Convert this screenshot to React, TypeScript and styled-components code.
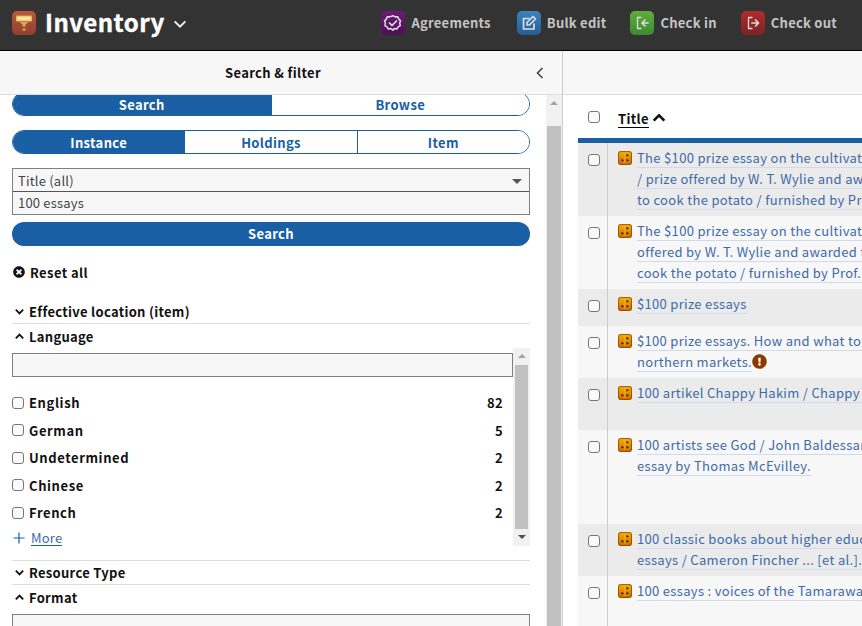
import React from "react";
import styled, { createGlobalStyle } from "styled-components";
import { FaExclamationCircle, FaTimesCircle } from "react-icons/fa";

const BLUE = "#1a5fa3";
const FONT = `"Noto Sans CJK SC", "Source Sans Pro", "Open Sans", sans-serif`;

type Row = { lines: string[]; height: number; warn?: boolean };

const ROWS: Row[] = [
  {
    height: 73,
    lines: [
      "The $100 prize essay on the cultivation of the potato",
      "/ prize offered by W. T. Wylie and awarded to",
      "to cook the potato / furnished by Prof. E. Smith",
    ],
  },
  {
    height: 73,
    lines: [
      "The $100 prize essay on the cultivation of the potato",
      "offered by W. T. Wylie and awarded to D. Gilbert",
      "cook the potato / furnished by Prof. E. Smith",
    ],
  },
  { height: 37, lines: ["$100 prize essays"] },
  {
    height: 52,
    warn: true,
    lines: ["$100 prize essays. How and what to grow for", "northern markets."],
  },
  { height: 52, lines: ["100 artikel Chappy Hakim / Chappy Hakim"] },
  {
    height: 94,
    lines: ["100 artists see God / John Baldessari and others", "essay by Thomas McEvilley."],
  },
  {
    height: 52,
    lines: ["100 classic books about higher education", "essays / Cameron Fincher ... [et al.]."],
  },
  { height: 60, lines: ["100 essays : voices of the Tamarawa"] },
];

const LANGUAGES = [
  { name: "English", count: 82 },
  { name: "German", count: 5 },
  { name: "Undetermined", count: 2 },
  { name: "Chinese", count: 2 },
  { name: "French", count: 2 },
];

function Chevron({ up, size = 12, weight = 2 }: { up?: boolean; size?: number; weight?: number }) {
  return (
    <svg width={size} height={size} viewBox="0 0 12 12" fill="none" stroke="currentColor" strokeWidth={weight}>
      <path d={up ? "M2 8l4-4 4 4" : "M2 4l4 4 4-4"} />
    </svg>
  );
}

function AppLogo() {
  return (
    <svg width="24" height="24" viewBox="0 0 24 24">
      <defs>
        <linearGradient id="logoBg" x1="0" y1="0" x2="0" y2="1">
          <stop offset="0" stopColor="#b9573a" />
          <stop offset="1" stopColor="#8e4031" />
        </linearGradient>
      </defs>
      <rect width="24" height="24" rx="5" fill="url(#logoBg)" />
      <rect x="4.5" y="5" width="15" height="5" fill="#f6e3a0" stroke="#e2b050" />
      <path d="M7.5 11h9l-3 2.5v2h-3v-2z" fill="#dfa35a" />
      <circle cx="12" cy="18.5" r="1.5" fill="#d89a50" />
    </svg>
  );
}

function ActionIcon({ kind }: { kind: "agreements" | "bulk" | "in" | "out" }) {
  return (
    <svg width="24" height="24" viewBox="0 0 24 24" fill="none" stroke="#dcdcdc" strokeWidth="1.7" strokeLinecap="round" strokeLinejoin="round">
      {kind === "agreements" && (
        <>
          <path d="M12 4l2.6 1.2 2.8-.1 1 2.6 2 1.9-1 2.6.7 2.7-2.4 1.4-1.5 2.4-2.8-.5L12 20l-2.4-1.8-2.8.5-1.5-2.4L3 14.900l.6-2.700-1-2.600 2-1.900 1-2.600 2.800.1z" transform="translate(1.2 1.200) scale(.9)" />
          <path d="M8.500 12l2.500 2.500 4.500-4.500" />
        </>
      )}
      {kind === "bulk" && (
        <>
          <path d="M17 13v5H6.500V7.500H12" />
          <path d="M10 11.500L16 5.500l2.500 2.500-6 6H10z" />
        </>
      )}
      {kind === "in" && (
        <>
          <path d="M11 6.500H7.500v11H11" strokeWidth="1.300" />
          <path d="M18 12h-6M15 9l-3 3 3 3" />
        </>
      )}
      {kind === "out" && (
        <>
          <path d="M11 6.500H7.500v11H11" strokeWidth="1.300" />
          <path d="M11 12h6.500M14.500 9l3 3-3 3" />
        </>
      )}
    </svg>
  );
}

function RecordIcon() {
  return (
    <RecordTile>
      <svg width="14" height="14" viewBox="0 0 14 14">
        <path d="M7 2v10" stroke="#f7cf5a" strokeWidth=".6" />
        <path d="M8.500 3l2.500 1.300-2.500 1.300zM3.500 8l2.500 1.300-2.500 1.300zM8.500 8l2.500 1.300-2.500 1.300z" fill="#1c1200" />
      </svg>
    </RecordTile>
  );
}

export default function App() {
  return (
    <>
      <GlobalStyle />
      <Page>
        <TopBar>
          <Brand>
            <AppLogo />
            <BrandName>Inventory</BrandName>
            <BrandCaret>
              <Chevron size={16} weight={1.5} />
            </BrandCaret>
          </Brand>
          <Actions>
            <Action>
              <ActionTile $from="#6d1a78" $to="#4d1154">
                <ActionIcon kind="agreements" />
              </ActionTile>
              <ActionLabel>Agreements</ActionLabel>
            </Action>
            <Action>
              <ActionTile $from="#3a83bd" $to="#245f94">
                <ActionIcon kind="bulk" />
              </ActionTile>
              <ActionLabel>Bulk edit</ActionLabel>
            </Action>
            <Action>
              <ActionTile $from="#60ad3c" $to="#3c8a33">
                <ActionIcon kind="in" />
              </ActionTile>
              <ActionLabel>Check in</ActionLabel>
            </Action>
            <Action>
              <ActionTile $from="#b02c2c" $to="#7c2222">
                <ActionIcon kind="out" />
              </ActionTile>
              <ActionLabel>Check out</ActionLabel>
            </Action>
          </Actions>
        </TopBar>

        <Panes>
          <FilterPane>
            <PaneHeader>
              <PaneTitle>Search &amp; filter</PaneTitle>
              <CollapseButton>
                <svg width="12" height="14" viewBox="0 0 12 14" fill="none" stroke="#444" strokeWidth="1.600">
                  <path d="M8.500 2l-5 5 5 5" />
                </svg>
              </CollapseButton>
            </PaneHeader>
            <FilterBody>
              <FilterContent>
                <Segments $clipped>
                  <Segment $active>Search</Segment>
                  <Segment>Browse</Segment>
                </Segments>
                <Segments>
                  <Segment $active>Instance</Segment>
                  <Segment>Holdings</Segment>
                  <Segment>Item</Segment>
                </Segments>
                <SearchBox>
                  <SelectField>
                    Title (all)
                    <SelectArrow />
                  </SelectField>
                  <QueryField>100 essays</QueryField>
                </SearchBox>
                <SearchButton>Search</SearchButton>
                <ResetRow>
                  <FaTimesCircle size={12} />
                  Reset all
                </ResetRow>
                <AccordionHead $first>
                  <Chevron size={11} />
                  Effective location (item)
                </AccordionHead>
                <AccordionHead $open>
                  <Chevron up size={11} />
                  Language
                </AccordionHead>
                <LanguageGroup>
                  <LanguageColumn>
                    <FilterInput />
                    <LanguageList>
                      {LANGUAGES.map((l) => (
                        <LanguageRow key={l.name}>
                          <Check readOnly type="checkbox" />
                          <LanguageName>{l.name}</LanguageName>
                          <LanguageCount>{l.count}</LanguageCount>
                        </LanguageRow>
                      ))}
                    </LanguageList>
                    <MoreRow>
                      <svg width="12" height="12" viewBox="0 0 12 12" stroke={BLUE} strokeWidth="1.200">
                        <path d="M6 .5v11M.5 6h11" />
                      </svg>
                      <MoreLink>More</MoreLink>
                    </MoreRow>
                  </LanguageColumn>
                  <ScrollBar $inner>
                    <ScrollArrow />
                    <ScrollThumb $inner />
                    <ScrollArrow $down />
                  </ScrollBar>
                </LanguageGroup>
                <AccordionHead $first $spaced>
                  <Chevron size={11} />
                  Resource Type
                </AccordionHead>
                <AccordionHead $open>
                  <Chevron up size={11} />
                  Format
                </AccordionHead>
                <FormatInput />
              </FilterContent>
              <ScrollBar>
                <ScrollArrow />
                <ScrollThumb />
              </ScrollBar>
            </FilterBody>
          </FilterPane>

          <ResultsPane>
            <PaneHeader />
            <Results>
              <ResultsHead>
                <CheckCell $head>
                  <Check readOnly type="checkbox" />
                </CheckCell>
                <TitleSort>Title</TitleSort>
                <SortCaret>
                  <Chevron up size={16} weight={2} />
                </SortCaret>
              </ResultsHead>
              {ROWS.map((row, i) => (
                <ResultRow key={i} $height={row.height} $odd={i % 2 === 0}>
                  <CheckCell>
                    <Check readOnly type="checkbox" />
                  </CheckCell>
                  <TitleCell>
                    <RecordIcon />
                    <LineStack>
                      {row.lines.map((line, j) => (
                        <TitleLine key={j}>
                          <TitleText>{line}</TitleText>
                          {row.warn && j === row.lines.length - 1 && (
                            <WarnIcon>
                              <FaExclamationCircle size={15} />
                            </WarnIcon>
                          )}
                        </TitleLine>
                      ))}
                    </LineStack>
                  </TitleCell>
                </ResultRow>
              ))}
            </Results>
          </ResultsPane>
        </Panes>
      </Page>
    </>
  );
}

const GlobalStyle = createGlobalStyle`
  html, body, #root {
    margin: 0;
    height: 100%;
    overflow: hidden;
  }
  body {
    font-family: ${FONT};
    font-size: 13px;
    letter-spacing: 0.2px;
    background: #fff;
    color: #111;
  }
  * {
    box-sizing: border-box;
  }
`;

const Page = styled.div`
  display: flex;
  flex-direction: column;
  height: 100vh;
  overflow: hidden;
`;

const TopBar = styled.header`
  flex: 0 0 51px;
  display: flex;
  align-items: center;
  padding: 0 25px 4px 12px;
  background: #333;
  border-bottom: 1px solid #000;
`;

const Brand = styled.div`
  display: flex;
  align-items: center;
`;

const BrandName = styled.span`
  position: relative;
  top: -1px;
  margin-left: 9px;
  color: #fff;
  font-size: 24px;
  line-height: 30px;
  font-weight: 700;
  letter-spacing: 0.47px;
  -webkit-text-stroke: 0.4px #fff;
`;

const BrandCaret = styled.span`
  display: flex;
  margin-left: 7px;
  margin-top: 2px;
  color: #eee;
`;

const Actions = styled.nav`
  display: flex;
  align-items: center;
  gap: 24px;
  margin-left: auto;
`;

const Action = styled.div`
  display: flex;
  align-items: center;
  gap: 6px;

  &:first-child {
    margin-right: 2px;
  }
`;

const ActionLabel = styled.span`
  position: relative;
  top: -1px;
  color: #c4c4c4;
  font-weight: 700;
  letter-spacing: 0.25px;
`;

const ActionTile = styled.span<{ $from: string; $to: string }>`
  display: flex;
  width: 24px;
  height: 24px;
  border-radius: 5px;
  background: linear-gradient(${(p) => p.$from}, ${(p) => p.$to});
`;

const Panes = styled.div`
  flex: 1;
  display: flex;
  min-height: 0;
`;

const FilterPane = styled.section`
  flex: 0 0 562px;
  display: flex;
  flex-direction: column;
  min-height: 0;
`;

const ResultsPane = styled.section`
  flex: 1;
  display: flex;
  flex-direction: column;
  min-width: 0;
  border-left: 1px solid #ccc;
`;

const PaneHeader = styled.div`
  flex: 0 0 44px;
  display: flex;
  align-items: center;
  background: #f7f7f7;
  border-bottom: 1px solid #ddd;
`;

const PaneTitle = styled.div`
  flex: 1;
  padding-left: 12px;
  text-align: center;
  font-weight: 700;
  letter-spacing: 0.35px;
`;

const CollapseButton = styled.span`
  display: flex;
  margin-right: 16px;
`;

const FilterBody = styled.div`
  flex: 1;
  display: flex;
  min-height: 0;
`;

const FilterContent = styled.div`
  flex: 1;
  min-width: 0;
  padding: 0 16px 0 12px;
  overflow: hidden;
`;

const Segments = styled.div<{ $clipped?: boolean }>`
  display: flex;
  height: 24px;
  margin-top: ${(p) => (p.$clipped ? "-3px" : "14px")};
  border: 1px solid ${BLUE};
  border-radius: 12px;
  overflow: hidden;
`;

const Segment = styled.div<{ $active?: boolean }>`
  flex: 1;
  display: flex;
  align-items: center;
  justify-content: center;
  background: ${(p) => (p.$active ? BLUE : "#fff")};
  color: ${(p) => (p.$active ? "#fff" : BLUE)};
  font-weight: 700;
  letter-spacing: 0.35px;

  & + & {
    border-left: 1px solid ${BLUE};
  }
`;

const SearchBox = styled.div`
  margin-top: 14px;
  border: 1px solid #808080;
  background: #f7f7f7;
  color: #444;
`;

const SelectField = styled.div`
  position: relative;
  height: 23px;
  padding-left: 5px;
  line-height: 23px;
  border-bottom: 1px solid #555;
`;

const SelectArrow = styled.span`
  position: absolute;
  top: 10px;
  right: 7px;
  border: 5px solid transparent;
  border-top: 5px solid #555;
  border-bottom: 0;
`;

const QueryField = styled.div`
  height: 22px;
  padding-left: 5px;
  line-height: 22px;
`;

const SearchButton = styled.div`
  height: 24px;
  margin-top: 7px;
  border-radius: 12px;
  background: ${BLUE};
  color: #fff;
  text-align: center;
  line-height: 24px;
  font-weight: 700;
  letter-spacing: 0.35px;
`;

const ResetRow = styled.div`
  display: flex;
  align-items: center;
  gap: 5px;
  height: 20px;
  margin-top: 16px;
  padding-left: 1px;
  font-weight: 700;
  letter-spacing: 0.4px;
`;

const AccordionHead = styled.div<{ $first?: boolean; $open?: boolean; $spaced?: boolean }>`
  display: flex;
  align-items: center;
  gap: 4px;
  height: ${(p) => (p.$open ? "24px" : "25px")};
  margin-top: ${(p) => (p.$spaced ? "14px" : p.$first ? "17px" : "0")};
  padding-left: 2px;
  border-top: ${(p) => (p.$spaced ? "1px solid #ddd" : "0")};
  border-bottom: ${(p) => (p.$open ? "0" : "1px solid #ddd")};
  font-weight: 700;
  letter-spacing: 0.3px;
`;

const LanguageGroup = styled.div`
  display: flex;
  height: 198px;
`;

const LanguageColumn = styled.div`
  flex: 1;
  min-width: 0;
  padding-top: 5px;
  overflow: hidden;
`;

const FilterInput = styled.div`
  height: 24px;
  border: 1px solid #808080;
  background: #f7f7f7;
`;

const LanguageList = styled.div`
  margin-top: 12px;
`;

const LanguageRow = styled.div`
  display: flex;
  align-items: center;
  height: 27.5px;
  padding-right: 10px;
`;

const LanguageName = styled.span`
  margin-left: 5px;
  font-weight: 700;
  letter-spacing: 0.6px;
`;

const LanguageCount = styled.span`
  margin-left: auto;
  font-weight: 700;
  letter-spacing: 0.35px;
`;

const MoreRow = styled.div`
  display: flex;
  align-items: center;
  gap: 6px;
  height: 22px;
  padding-left: 1px;
`;

const MoreLink = styled.span`
  color: #3d6aa8;
  border-bottom: 1px solid ${BLUE};
  line-height: 15px;
`;

const FormatInput = styled.div`
  height: 30px;
  margin-top: 5px;
  border: 1px solid #808080;
  background: #f7f7f7;
`;

const ScrollBar = styled.div<{ $inner?: boolean }>`
  flex: 0 0 ${(p) => (p.$inner ? "17px" : "16px")};
  display: flex;
  flex-direction: column;
  background: #f1f1f1;
  padding: 0 ${(p) => (p.$inner ? "2px" : "1px")};
`;

const ScrollArrow = styled.div<{ $down?: boolean }>`
  flex: 0 0 17px;
  position: relative;

  &::after {
    content: "";
    position: absolute;
    left: 50%;
    top: 6px;
    margin-left: -4px;
    border: 4px solid transparent;
    ${(p) =>
      p.$down
        ? "border-top: 4px solid #505050; border-bottom: 0;"
        : "border-bottom: 4px solid #a3a3a3; border-top: 0;"}
  }
`;

const ScrollThumb = styled.div<{ $inner?: boolean }>`
  flex: 1;
  background: #c1c1c1;
  margin-top: ${(p) => (p.$inner ? "0" : "14px")};
`;

const Check = styled.input`
  appearance: none;
  flex: none;
  display: block;
  width: 12px;
  height: 12px;
  margin: 0;
  border: 1px solid #767676;
  border-radius: 3px;
  background: #fafafa;
`;

const Results = styled.div`
  flex: 1;
  min-height: 0;
  padding-left: 15px;
  overflow: hidden;
`;

const ResultsHead = styled.div`
  display: flex;
  height: 48px;
  border-bottom: 5px solid ${BLUE};
  background: #fff;
`;

const CheckCell = styled.div<{ $head?: boolean }>`
  flex: 0 0 30px;
  padding: ${(p) => (p.$head ? "16px 0 0 10px" : "11px 0 0 10px")};
  border-right: ${(p) => (p.$head ? "0" : "1px solid #ccc")};
`;

const TitleSort = styled.span`
  align-self: flex-start;
  margin: 16px 0 0 10px;
  line-height: 16px;
  border-bottom: 1px solid #000;
  font-weight: 700;
  letter-spacing: 0.35px;
`;

const SortCaret = styled.span`
  display: flex;
  margin: 15px 0 0 2px;
  height: 16px;
`;

const ResultRow = styled.div<{ $height: number; $odd: boolean }>`
  display: flex;
  height: ${(p) => p.$height}px;
  background: ${(p) => (p.$odd ? "#ebebeb" : "#f7f7f7")};
`;

const TitleCell = styled.div`
  flex: 1;
  display: flex;
  min-width: 0;
  padding: 4px 0 0 10px;
  overflow: hidden;
`;

const RecordTile = styled.span`
  flex: none;
  display: flex;
  width: 14px;
  height: 14px;
  margin-top: 4px;
  border-radius: 3px;
  background: linear-gradient(#f3b200, #d06800);
  box-shadow: inset 0 0 0 1px rgba(130, 60, 0, 0.65);
`;

const LineStack = styled.div`
  margin-left: 5px;
`;

const TitleLine = styled.div`
  display: flex;
  align-items: center;
  height: 21px;
  white-space: nowrap;
`;

const TitleText = styled.span`
  display: block;
  height: 21px;
  line-height: 22px;
  color: #3d6aa8;
  letter-spacing: 0.32px;
  border-bottom: 1px solid #cfdaea;
`;

const WarnIcon = styled.span`
  display: flex;
  color: #8a3a00;
`;
